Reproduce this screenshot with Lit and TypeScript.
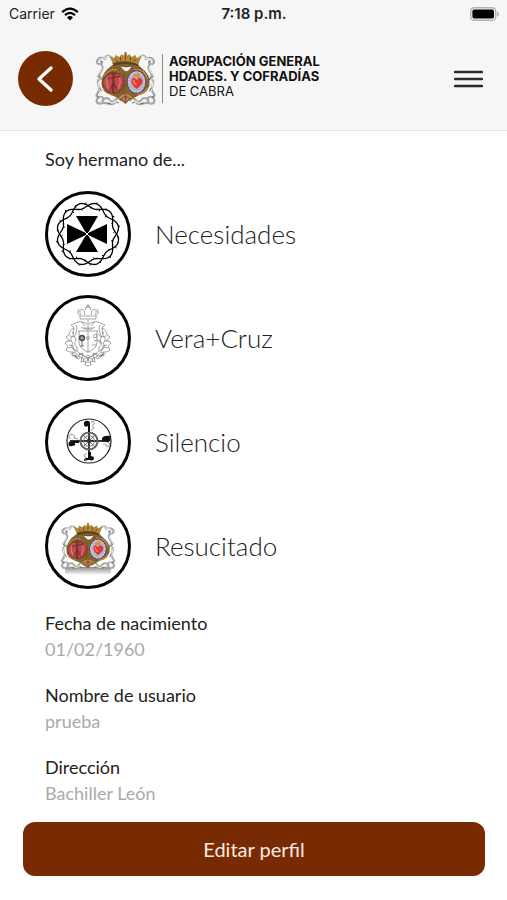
import { LitElement, html, css, svg } from "lit";
import { customElement, property } from "lit/decorators.js";

type Badge = "necesidades" | "veracruz" | "silencio" | "resucitado";

const BROTHERHOODS: { name: string; badge: Badge }[] = [
  { name: "Necesidades", badge: "necesidades" },
  { name: "Vera+Cruz", badge: "veracruz" },
  { name: "Silencio", badge: "silencio" },
  { name: "Resucitado", badge: "resucitado" },
];

const FIELDS = [
  { label: "Fecha de nacimiento", value: "01/02/1960" },
  { label: "Nombre de usuario", value: "prueba" },
  { label: "Dirección", value: "Bachiller León" },
];

/** One strand of the braided crown of thorns, centred on (43, 43). */
function strand(phase: number): string {
  const points: string[] = [];
  for (let i = 0; i <= 180; i++) {
    const a = (i / 180) * Math.PI * 2;
    const r = 28.5 + 2.8 * Math.sin(6 * a + phase);
    points.push(`${(43 + r * Math.cos(a)).toFixed(2)},${(43 + r * Math.sin(a)).toFixed(2)}`);
  }
  return points.join(" ");
}

/** Short thorns pointing away from the braid. */
function thorns(): string {
  let d = "";
  for (let i = 0; i < 36; i++) {
    const a = (i / 36) * Math.PI * 2 + 0.08;
    const outward = i % 2 === 0;
    const swing = 2.8 * Math.abs(Math.sin(6 * a));
    const r1 = outward ? 28.5 + swing : 28.5 - swing;
    const r2 = outward ? r1 + 1.6 : r1 - 1.6;
    const b = a + 0.04;
    d += `M${(43 + r1 * Math.cos(a)).toFixed(2)} ${(43 + r1 * Math.sin(a)).toFixed(2)}`;
    d += `L${(43 + r2 * Math.cos(b)).toFixed(2)} ${(43 + r2 * Math.sin(b)).toFixed(2)}`;
  }
  return d;
}

/** Silver scrollwork for the left half of the coat of arms, in a 60 x 54 box. */
const scrolls = svg`
  <path d="M15 5c-3-3-6 0-4 2 -3-1-6-2-8 0s-2 4 0 5 4-1 3-2M5 12c3 2 2 5 0 8s-2 5 1 7M3 28c-2 4 1 6 1 9s-3 4-3 7M2 51c-2-3 0-6 3-6s4 3 2 4M7 49c2-4 6-3 7-1s4 3 6 0 4-2 5 0M2 51c3 2 5-1 8 0s6 2 9 0" fill="none" stroke="#a3a9a7" stroke-width="2.3" stroke-linecap="round"/>
  <path d="M14 5c-2-2-4 0-2 2 -3-1-6-1-8 1M4 13c3 2 2 5 0 8M3 30c-1 3 1 5 1 8M3 49c-1-2 1-3 3-3M9 49c2-2 4-1 5 1s4 1 6-1" fill="none" stroke="#eceeed" stroke-width="1.1" stroke-linecap="round"/>
  <path d="M5 9l2 1M2 24l2 2M4 36l2 3M2 44l1 2M12 51l3 1M21 50l2 1" stroke="#66695f" stroke-width="1" stroke-linecap="round"/>
`;

const coatOfArms = svg`
  ${scrolls}
  <g transform="translate(60 0) scale(-1 1)">${scrolls}</g>
  <path d="M17 13Q30 9 43 13L48 18Q55 24 54 33Q52 42 44 43Q38 46 33 49L30 52L26 49Q22 45 15 43Q6 40 6 31Q6 23 12 17Z" fill="#86622d"/>
  <path d="M9 24Q14 15 22 18M38 17Q49 16 52 27M8 36Q12 42 18 42M42 43Q50 41 52 36M24 46Q30 40 36 46" fill="none" stroke="#c39a4d" stroke-width="1.3"/>
  <path d="M10 21Q16 14 24 18M28 22Q31 30 28 42M37 17Q50 14 54 28" fill="none" stroke="#503b1d" stroke-width="1" stroke-dasharray="1.5 1.5"/>
  <path d="M17 11L14 4L19 6L20 3L24 5L26 2L28 4L29 0H31L32 4L34 2L36 5L40 3L41 6L46 4L43 12Q30 8 17 11Z" fill="#b3863c"/>
  <path d="M17 11Q30 7 43 12L42 14Q30 10 18 14Z" fill="#63401c"/>
  <path d="M20 7l2 3M25 5v4M30 3v5M35 5v4M40 7l-2 3" stroke="#70501f" stroke-width="1"/>
  <path d="M24 14Q30 16 37 14L33 19Q31 20 29 19Z" fill="#fafafa" stroke="#493822" stroke-width=".6"/>
  <ellipse cx="18" cy="31" rx="11" ry="11" fill="#7a4028"/>
  <path d="M17 23Q11 21 8 29Q7 36 16 41Z" fill="#c14a54"/>
  <path d="M19 23Q27 20 28 30Q27 38 19 41Z" fill="#c04452"/>
  <path d="M12 26Q10 31 14 38M24 26Q26 31 22 38" fill="none" stroke="#dd7a7e" stroke-width="1.2"/>
  <path d="M18 20V42M12 27L25 24M18 31L14 38M18 31L22 38" stroke="#6f3126" stroke-width="1.1"/>
  <ellipse cx="41" cy="30" rx="10" ry="12" fill="#665064"/>
  <ellipse cx="41" cy="30" rx="8.6" ry="10.8" fill="#b7b1d1"/>
  <ellipse cx="41" cy="30" rx="8" ry="10" fill="none" stroke="#dcd7e8" stroke-width="1.2" stroke-dasharray="1.4 1.6"/>
  <path d="M38 25Q38 20 41 22L43 20Q45 23 44 26Z" fill="#d99637"/>
  <path d="M41 28Q38 23 36 28Q35 32 41 37Q48 32 47 28Q44 23 41 28Z" fill="#df3932"/>
  <path d="M38 28Q38 31 41 33" fill="none" stroke="#ff8f6e" stroke-width="1.2"/>
  <circle cx="30" cy="46" r="3.2" fill="#b97966"/>
  <path d="M28 45h4M30 43v6" stroke="#5e4025" stroke-width=".8"/>
`;

/** Left half of the Vera+Cruz mantle; the right one is its mirror image. */
const mantle = svg`
  <path d="M42 29Q36 25 31 28L26 30L29 33Q24 35 24 40L21 42L24 45L20 48L23 51L21 55Q24 58 28 57L27 61L31 60L33 64L37 62L36 67L41 66L40 70L43 71" />
  <path d="M31 30Q33 34 31 38Q28 41 31 45Q28 49 32 52Q31 57 36 59Q39 61 43 63" />
  <path d="M27 37Q30 39 27 42Q24 45 28 48Q25 50 28 54L32 56M34 60L38 58L37 64M29 33L28 39M24 50L29 51M31 58L35 62" />
  <path d="M25 41L30 42M22 46L27 46M23 53L28 52L30 57M26 59L31 57M33 62L35 58L40 62L43 60M38 67L39 63" />
  <path d="M34 14Q31 18 35 21V24H43M35 21H43M36 20Q33 15 37 14Q40 15 40 20M40 15Q40 12 43 12" />
  <path d="M33 36H43M34 36V48Q35 54 43 57M36 32Q39 35 43 34M37 27L40 31" />
`;

const ART = {
  necesidades: svg`
    <g fill="none" stroke="#000" stroke-linejoin="round">
      <polyline points=${strand(0)} stroke-width="1.3"/>
      <polyline points=${strand(Math.PI)} stroke-width="1.3"/>
      <path d=${thorns()} stroke-width="1"/>
    </g>
    <path d="M31 25H53L43 42L62 33V53L43 44L53 61H31L41 44L22 53V33L41 42Z" fill="#000"/>
    <path d="M36 37L48 49M48 37L36 49" stroke="#fff" stroke-width="1"/>
  `,
  veracruz: svg`
    <g fill="none" stroke="#8a8a8a" stroke-width=".8" stroke-linejoin="round">
      ${mantle}
      <g transform="translate(86 0) scale(-1 1)">${mantle}</g>
      <path d="M43 9V13M41 11H45M43 25V58M38 33H48"/>
      <path d="M38 65Q43 60 48 65M40 69Q43 65 46 69"/>
      <circle cx="43" cy="43" r="1.5"/>
      <path d="M48 41l3-2 1 3-3 1zM53 39l3 3M49 46l4-1 2 3M55 45l1 4M47 50h5"/>
    </g>
    <circle cx="37" cy="43" r="2.4" fill="#aaa" stroke="#4b4b4b" stroke-width="1.5"/>
    <path d="M37 46V51M35 51H39" stroke="#777" stroke-width="1.2"/>
    <path d="M29 60l3 3M55 62l3-3M43 62v4" stroke="#777" stroke-width="1.4"/>
  `,
  silencio: svg`
    <circle cx="44" cy="42" r="22" fill="none" stroke="#222" stroke-width="1.2"/>
    <path d="M44 24V60M25 42H64" stroke="#333" stroke-width="2"/>
    <circle cx="44" cy="42" r="8.6" fill="none" stroke="#666" stroke-width="2"/>
    <circle cx="44" cy="42" r="5.4" fill="none" stroke="#777" stroke-width="1"/>
    <path d="M38 36L50 48M50 36L38 48" stroke="#666" stroke-width="1"/>
    <path d="M44 22Q38 21 39 26Q40 29 43 27V33H45V24ZM45 61Q49 63 49 58L46 57V53H43V59Q39 58 39 62L43 61ZM24 43Q22 48 27 47Q31 47 30 44H34V42H26ZM57 42V39Q59 36 65 37Q67 43 62 43Z" fill="#111"/>
    <g fill="none" stroke="#888" stroke-width=".9">
      <path d="M46 23Q50 21 49 25Q46 26 49 29L46 31M41 54L39 57Q42 58 40 61M25 40Q22 36 27 35Q31 37 29 39L33 40M58 45Q62 44 61 47Q64 49 65 45L62 43"/>
    </g>
    <circle cx="44" cy="42" r="1.8" fill="#333"/>
  `,
  resucitado: svg`
    <defs>
      <linearGradient id="base" x1="0" y1="0" x2="0" y2="1">
        <stop offset="0" stop-color="#8c8c8c"/>
        <stop offset="1" stop-color="#fff"/>
      </linearGradient>
    </defs>
    <rect x="20" y="64" width="46" height="8" rx="3" fill="url(#base)"/>
    <g transform="translate(16 20) scale(.9 .87)">${coatOfArms}</g>
  `,
};

@customElement("brotherhood-row")
export class BrotherhoodRow extends LitElement {
  @property() name = "";
  @property() badge: Badge = "necesidades";

  static styles = css`
    :host {
      display: flex;
      align-items: center;
      gap: 24px;
    }
    .badge {
      flex: none;
      width: 80px;
      height: 80px;
      border: 3px solid #050505;
      border-radius: 50%;
      background: #fff;
    }
    .art {
      display: block;
      width: 80px;
      height: 80px;
    }
    .name {
      font-size: 26px;
      line-height: 32px;
      font-weight: 300;
    }
  `;

  render() {
    return html`
      <span class="badge"><svg class="art" viewBox="3 3 80 80" aria-hidden="true">${ART[this.badge]}</svg></span>
      <span class="name">${this.name}</span>
    `;
  }
}

@customElement("app-root")
export class AppRoot extends LitElement {
  static styles = css`
    :host {
      display: block;
      min-height: 100vh;
      background: #fff;
      color: #222;
      font-family: Lato, "Open Sans", sans-serif;
    }
    .top {
      background: #f6f6f6;
      border-bottom: 1px solid #e4e4e4;
    }
    .status {
      display: grid;
      grid-template-columns: 1fr auto 1fr;
      align-items: center;
      height: 27px;
      padding: 0 8px 0 9px;
      font: 400 14px/20px Inter, sans-serif;
    }
    .carrier {
      display: flex;
      align-items: center;
      gap: 6px;
    }
    .time {
      font-size: 15px;
      font-weight: 600;
    }
    .battery {
      justify-self: end;
    }
    .bar {
      display: flex;
      align-items: center;
      padding: 24px 24px 24px 18px;
    }
    .back,
    .menu {
      display: grid;
      place-items: center;
      padding: 0;
      border: 0;
      background: none;
      cursor: pointer;
    }
    .back {
      width: 55px;
      height: 55px;
      border-radius: 50%;
      background: #782b03;
    }
    .brand {
      display: flex;
      align-items: center;
      margin-left: 22px;
      color: #111;
    }
    .brand-text {
      margin-left: 6px;
      padding: 0 0 4px 6px;
      border-left: 1px solid #8d8d8d;
      font: 400 13px/15px Inter, sans-serif;
      white-space: nowrap;
    }
    .brand-name {
      display: block;
      font-weight: 700;
    }
    .menu {
      margin-left: auto;
    }
    svg {
      display: block;
    }
    .content {
      padding: 16px 45px;
    }
    .heading {
      margin: 0 0 20px;
      font-size: 18px;
      line-height: 24px;
      font-weight: 400;
    }
    .list {
      display: grid;
      gap: 18px;
      margin: 0 0 21px;
      padding: 0;
      list-style: none;
    }
    .fields {
      display: grid;
      gap: 20px;
      margin: 0;
      font-size: 18px;
      line-height: 26px;
    }
    .value {
      margin: 0;
      color: #aaa;
      font-weight: 400;
    }
    .actions {
      padding: 0 22px 24px 23px;
    }
    .edit {
      display: block;
      width: 100%;
      padding: 15px;
      border: 0;
      border-radius: 12px;
      background: #782b03;
      color: #fbe9e0;
      font: 400 20px/24px Lato, sans-serif;
      cursor: pointer;
    }
  `;

  render() {
    return html`
      <header class="top">
        <div class="status">
          <span class="carrier">
            Carrier
            <svg width="18" height="14" viewBox="0 0 18 14" aria-hidden="true">
              <path d="M1.2 5.2Q9-2 16.8 5.2M4 8.2Q9 3.6 14 8.2" fill="none" stroke="#000" stroke-width="2.3"/>
              <path d="M6 10.4Q9 7.6 12 10.4L9 13.6Z"/>
            </svg>
          </span>
          <span class="time">7:18 p.m.</span>
          <svg class="battery" width="29" height="14" viewBox="0 0 29 14" aria-hidden="true">
            <rect x=".7" y=".7" width="25" height="12.6" rx="3.6" fill="none" stroke="#b1b1b1" stroke-width="1.4"/>
            <rect x="2.4" y="2.4" width="21.6" height="9.2" rx="1.8"/>
            <path d="M27 4.4Q29 5.4 29 7T27 9.6Z" fill="#b1b1b1"/>
          </svg>
        </div>
        <nav class="bar">
          <button class="back" type="button" aria-label="Volver">
            <svg width="28" height="28" viewBox="0 0 28 28" aria-hidden="true">
              <path d="M19 3L7 14L19 25" fill="none" stroke="#fff" stroke-width="3.4" stroke-linecap="round" stroke-linejoin="round"/>
            </svg>
          </button>
          <div class="brand">
            <svg width="61" height="54" viewBox="0 0 60 54" aria-hidden="true">${coatOfArms}</svg>
            <div class="brand-text">
              <strong class="brand-name">AGRUPACIÓN GENERAL</strong>
              <strong class="brand-name">HDADES. Y COFRADÍAS</strong>
              DE CABRA
            </div>
          </div>
          <button class="menu" type="button" aria-label="Menú">
            <svg width="29" height="18" viewBox="0 0 29 18" aria-hidden="true">
              <path d="M1 2H28M1 9H28M1 16H28" stroke="#2b2b2d" stroke-width="2.4" stroke-linecap="round"/>
            </svg>
          </button>
        </nav>
      </header>
      <main>
        <div class="content">
          <h1 class="heading">Soy hermano de...</h1>
          <ul class="list">
            ${BROTHERHOODS.map(
              (b) => html`<li><brotherhood-row .name=${b.name} .badge=${b.badge}></brotherhood-row></li>`
            )}
          </ul>
          <dl class="fields">
            ${FIELDS.map(
              (f) => html`<div><dt>${f.label}</dt><dd class="value">${f.value}</dd></div>`
            )}
          </dl>
        </div>
        <div class="actions">
          <button class="edit" type="button">Editar perfil</button>
        </div>
      </main>
    `;
  }
}
